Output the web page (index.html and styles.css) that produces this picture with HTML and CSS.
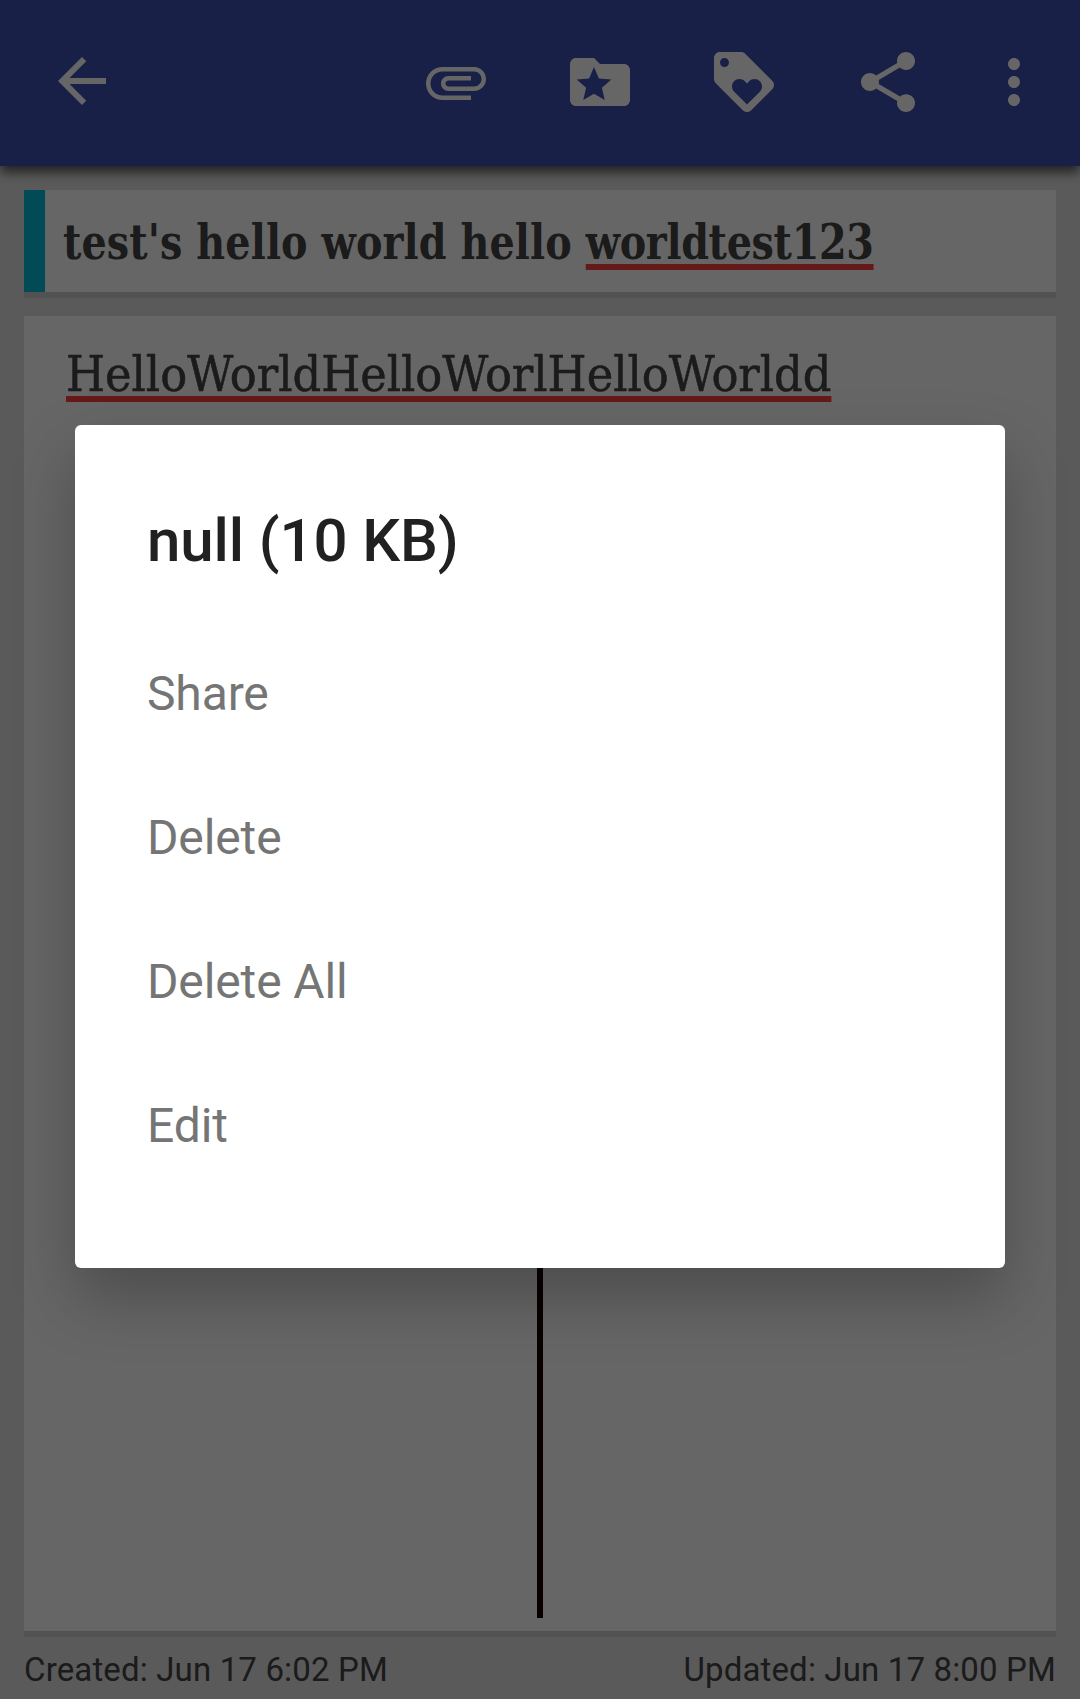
FILE: index.html
```html
<!DOCTYPE html>
<html lang="en">
<head>
<meta charset="utf-8">
<title>Note</title>
<link rel="stylesheet" href="styles.css">
</head>
<body>
<div class="screen">
  <header class="toolbar">
    <svg class="icon icon-back" viewBox="0 0 24 24"><path d="M20 11H7.83l5.59-5.59L12 4l-8 8 8 8 1.41-1.41L7.83 13H20v-2z"/></svg>
    <svg class="icon" viewBox="0 0 24 24"><path d="M7.5 18C4.46 18 2 15.54 2 12.5S4.46 7 7.5 7H18c2.21 0 4 1.79 4 4s-1.79 4-4 4H9.5C8.12 15 7 13.88 7 12.5S8.12 10 9.5 10H17v1.5H9.5c-.55 0-1 .45-1 1s.45 1 1 1H18c1.38 0 2.5-1.12 2.5-2.5S19.38 8.5 18 8.5H7.5c-2.21 0-4 1.79-4 4s1.79 4 4 4H17V18H7.5z"/></svg>
    <svg class="icon" viewBox="0 0 24 24"><path d="M20 6h-8l-2-2H4c-1.1 0-1.99.9-1.99 2L2 18c0 1.1.9 2 2 2h16c1.1 0 2-.9 2-2V8c0-1.1-.9-2-2-2zm-6.42 12L10 15.9 6.42 18l.95-4.07-3.16-2.74 4.16-.36L10 7l1.63 3.84 4.16.36-3.16 2.74.95 4.06z"/></svg>
    <svg class="icon" viewBox="0 0 24 24"><path d="M21.41 11.58l-9-9C12.05 2.22 11.55 2 11 2H4c-1.1 0-2 .9-2 2v7c0 .55.22 1.05.59 1.42l9 9c.36.36.86.58 1.41.58.55 0 1.05-.22 1.41-.59l7-7c.37-.36.59-.86.59-1.41 0-.55-.23-1.06-.59-1.42zM5.5 7C4.67 7 4 6.33 4 5.5S4.67 4 5.5 4 7 4.67 7 5.5 6.33 7 5.5 7zm11.77 8.27L13 19.54l-4.27-4.27C8.28 14.81 8 14.19 8 13.5c0-1.38 1.12-2.5 2.5-2.5.69 0 1.32.28 1.77.74l.73.72.73-.73c.45-.45 1.08-.73 1.77-.73 1.38 0 2.5 1.12 2.5 2.5 0 .69-.28 1.32-.73 1.77z"/></svg>
    <svg class="icon" viewBox="0 0 24 24"><path d="M18 16.08c-.76 0-1.44.3-1.96.77L8.91 12.7c.05-.23.09-.46.09-.7s-.04-.47-.09-.7l7.05-4.11c.54.5 1.25.81 2.04.81 1.66 0 3-1.34 3-3s-1.34-3-3-3-3 1.34-3 3c0 .24.04.47.09.7L8.04 9.81C7.5 9.31 6.79 9 6 9c-1.66 0-3 1.34-3 3s1.34 3 3 3c.79 0 1.5-.31 2.04-.81l7.05 4.12c-.06.22-.09.45-.09.69 0 1.66 1.34 3 3 3s3-1.34 3-3-1.34-2.92-3-2.92z"/></svg>
    <svg class="icon icon-more" viewBox="0 0 24 24"><path d="M12 8c1.1 0 2-.9 2-2s-.9-2-2-2-2 .9-2 2 .9 2 2 2zm0 2c-1.1 0-2 .9-2 2s.9 2 2 2 2-.9 2-2-.9-2-2-2zm0 6c-1.1 0-2 .9-2 2s.9 2 2 2 2-.9 2-2-.9-2-2-2z"/></svg>
  </header>
  <main class="note">
    <div class="card title-card">
      <div class="slab slab-title">test's hello world hello <span class="misspelled">worldtest123</span></div>
    </div>
    <div class="card body-card">
      <div class="slab slab-body"><span class="misspelled">HelloWorldHelloWorlHelloWorldd</span></div>
      <div class="sketch-line"></div>
    </div>
  </main>
  <footer class="dates">
    <span>Created: Jun 17 6:02 PM</span>
    <span>Updated: Jun 17 8:00 PM</span>
  </footer>
  <div class="scrim">
    <div class="dialog">
      <div class="dialog-title">null (10 KB)</div>
      <div class="dialog-item">Share</div>
      <div class="dialog-item">Delete</div>
      <div class="dialog-item">Delete All</div>
      <div class="dialog-item">Edit</div>
    </div>
  </div>
</div>
</body>
</html>
```
FILE: styles.css
```css
* { box-sizing: border-box; }

body {
  margin: 0;
  font-family: Roboto, "Liberation Sans", sans-serif;
}

.screen {
  position: relative;
  display: flex;
  flex-direction: column;
  width: 1080px;
  height: 1699px;
  overflow: hidden;
  background: #e1e1e1;
  color: #444;
}

.toolbar {
  display: flex;
  flex: none;
  gap: 72px;
  height: 166px;
  padding: 46px 30px 0 46px;
  background: #3f51b5;
  box-shadow: 0 6px 11px rgba(0, 0, 0, .64);
}

.icon {
  flex: none;
  width: 72px;
  height: 72px;
  fill: #fff;
}

.icon-back {
  margin-top: -1px;
  margin-right: auto;
}

.icon-more { margin-left: -18px; }

.note {
  display: flex;
  flex: 1;
  flex-direction: column;
  gap: 18px;
  padding: 24px 24px 0;
}

.card {
  background: #fff;
  border-bottom: 6px solid #cdcdcd;
}

.title-card {
  display: flex;
  height: 108px;
}

.title-card::before {
  content: "";
  width: 21px;
  background: #00bcd4;
}

.body-card {
  display: flex;
  flex: 1;
  flex-direction: column;
  padding: 26px 42px 13px;
}

.slab {
  font-family: "Roboto Slab", "DejaVu Serif Condensed", "DejaVu Serif", serif;
  font-size: 48px;
  line-height: 64px;
  white-space: nowrap;
  transform-origin: left top;
}

.slab-title {
  margin-left: 18px;
  padding-top: 20px;
  font-weight: 700;
  letter-spacing: .13px;
  transform: scaleX(.919);
}

.slab-title .misspelled { letter-spacing: -.33px; }

.slab-body {
  align-self: flex-start;
  -webkit-text-stroke: .5px #444;
  transform: scaleX(1.037);
}

.misspelled {
  text-decoration: underline 6px #ff4040;
  text-decoration-skip-ink: none;
  text-underline-offset: 5px;
}

.sketch-line {
  flex: 1;
  align-self: center;
  width: 6px;
  margin-top: 400px;
  background: #190000;
}

.dates {
  display: flex;
  flex: none;
  justify-content: space-between;
  height: 62px;
  padding: 12px 24px 0;
  font-size: 33px;
  letter-spacing: .15px;
  line-height: 42px;
}

/* Dims the note while the attachment menu is open */
.scrim {
  position: absolute;
  inset: 0;
  padding: 425px 75px 0;
  background: rgba(0, 0, 0, .6);
}

.dialog {
  height: 843px;
  padding: 80px 72px 0;
  border-radius: 6px;
  background: #fff;
  box-shadow: 0 30px 62px rgba(0, 0, 0, .25);
}

.dialog-title {
  height: 117px;
  color: #212121;
  font-size: 60px;
  font-weight: 500;
  letter-spacing: -.1px;
  line-height: 72px;
}

.dialog-item {
  height: 144px;
  color: #757575;
  font-size: 48px;
  letter-spacing: -.13px;
  line-height: 144px;
}
```
